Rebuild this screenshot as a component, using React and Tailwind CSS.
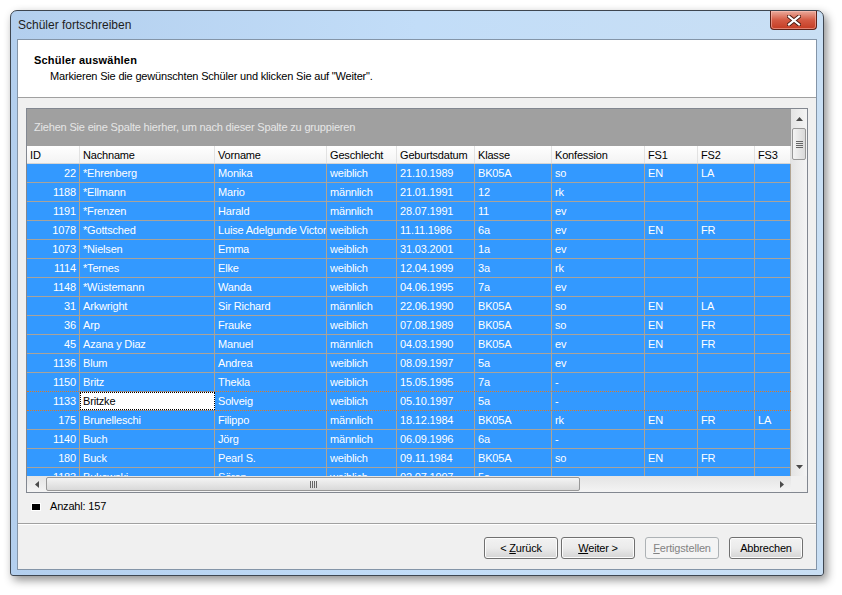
import React from 'react';

const cols = [
  { key: 'id', label: 'ID', w: 'w-[53px]', right: true },
  { key: 'nach', label: 'Nachname', w: 'w-[135px]' },
  { key: 'vor', label: 'Vorname', w: 'w-[112px]' },
  { key: 'ges', label: 'Geschlecht', w: 'w-[70px]' },
  { key: 'geb', label: 'Geburtsdatum', w: 'w-[78px]' },
  { key: 'kl', label: 'Klasse', w: 'w-[77px]' },
  { key: 'konf', label: 'Konfession', w: 'w-[93px]' },
  { key: 'fs1', label: 'FS1', w: 'w-[53px]' },
  { key: 'fs2', label: 'FS2', w: 'w-[57px]' },
  { key: 'fs3', label: 'FS3', w: 'flex-1' },
];

const rows = [
  ['22', '*Ehrenberg', 'Monika', 'weiblich', '21.10.1989', 'BK05A', 'so', 'EN', 'LA', ''],
  ['1188', '*Ellmann', 'Mario', 'männlich', '21.01.1991', '12', 'rk', '', '', ''],
  ['1191', '*Frenzen', 'Harald', 'männlich', '28.07.1991', '11', 'ev', '', '', ''],
  ['1078', '*Gottsched', 'Luise Adelgunde Victoria', 'weiblich', '11.11.1986', '6a', 'ev', 'EN', 'FR', ''],
  ['1073', '*Nielsen', 'Emma', 'weiblich', '31.03.2001', '1a', 'ev', '', '', ''],
  ['1114', '*Ternes', 'Elke', 'weiblich', '12.04.1999', '3a', 'rk', '', '', ''],
  ['1148', '*Wüstemann', 'Wanda', 'weiblich', '04.06.1995', '7a', 'ev', '', '', ''],
  ['31', 'Arkwright', 'Sir Richard', 'männlich', '22.06.1990', 'BK05A', 'so', 'EN', 'LA', ''],
  ['36', 'Arp', 'Frauke', 'weiblich', '07.08.1989', 'BK05A', 'so', 'EN', 'FR', ''],
  ['45', 'Azana y Diaz', 'Manuel', 'männlich', '04.03.1990', 'BK05A', 'ev', 'EN', 'FR', ''],
  ['1136', 'Blum', 'Andrea', 'weiblich', '08.09.1997', '5a', 'ev', '', '', ''],
  ['1150', 'Britz', 'Thekla', 'weiblich', '15.05.1995', '7a', '-', '', '', ''],
  ['1133', 'Britzke', 'Solveig', 'weiblich', '05.10.1997', '5a', '-', '', '', ''],
  ['175', 'Brunelleschi', 'Filippo', 'männlich', '18.12.1984', 'BK05A', 'rk', 'EN', 'FR', 'LA'],
  ['1140', 'Buch', 'Jörg', 'männlich', '06.09.1996', '6a', '-', '', '', ''],
  ['180', 'Buck', 'Pearl S.', 'weiblich', '09.11.1984', 'BK05A', 'so', 'EN', 'FR', ''],
  ['1183', 'Bukowski', 'Sören', 'weiblich', '02.07.1997', '5a', '-', '', '', ''],
];

const Arrow = ({ dir }) => {
  const pts = {
    up: '0,4 7,4 3.5,0',
    down: '0,0 7,0 3.5,4',
    left: '4,0 4,7 0,3.5',
    right: '0,0 0,7 4,3.5',
  }[dir];
  const vertical = dir === 'up' || dir === 'down';
  return (
    <svg width={vertical ? 7 : 4} height={vertical ? 4 : 7} viewBox={vertical ? '0 0 7 4' : '0 0 4 7'}>
      <polygon points={pts} fill="#4a4a4a" />
    </svg>
  );
};

const Button = ({ children, disabled }) => (
  <div
    className={
      disabled
        ? 'w-[74px] h-[22px] rounded-[3px] border border-[#adb2b5] bg-[#f4f4f4] text-[#838383] flex items-center justify-center'
        : 'w-[74px] h-[22px] rounded-[3px] border border-[#707070] bg-gradient-to-b from-[#f2f2f2] via-[#ebebeb] to-[#d4d4d4] text-black flex items-center justify-center shadow-[inset_0_0_0_1px_#fcfcfc]'
    }
  >
    <span className="whitespace-pre">{children}</span>
  </div>
);

export default function App() {
  return (
    <div className="w-[842px] h-[595px] bg-white overflow-hidden font-['Liberation_Sans',_Arial,_sans-serif] text-[11px] tracking-[-0.18px] text-black">
      <div className="pt-[10px] pl-[10px]">
        {/* Window */}
        <div className="w-[814px] h-[566px] rounded-t-[7px] rounded-b-[3px] border border-[#3e4650] bg-gradient-to-r from-[#b3cfee] via-[#c2ddf8] to-[#c9dff4] shadow-[3px_4px_10px_rgba(0,0,0,0.45)] flex flex-col">
          {/* Title bar */}
          <div className="h-[28px] flex justify-between items-start">
            <div className="pl-[7px] pt-[6px] text-[12px] tracking-normal text-[#1e1e1e] leading-[16px]">Schüler fortschreiben</div>
            <div className="mr-[6px] w-[47px] h-[19px] rounded-b-[4px] border border-t-0 border-[#5d2218] bg-gradient-to-b from-[#e9aa9c] via-[#d45a43] to-[#c43b22] flex items-center justify-center shadow-[inset_0_0_0_1px_rgba(255,200,190,0.5)]">
              <svg width="14" height="11" viewBox="0 0 14 11">
                <path d="M2 1.5 L12 9.5 M12 1.5 L2 9.5" stroke="#4a1a10" strokeWidth="4" strokeLinecap="square" />
                <path d="M2 1.5 L12 9.5 M12 1.5 L2 9.5" stroke="#ffffff" strokeWidth="2.2" strokeLinecap="square" />
              </svg>
            </div>
          </div>

          {/* Client area */}
          <div className="mx-[6px] h-[531px] border border-[#8495a8] bg-[#f0f0f0] flex flex-col">
            {/* Header */}
            <div className="h-[58px] bg-white border-b border-[#a0a0a0] pt-[13px] pl-[16px] leading-[14px]">
              <div className="font-bold tracking-[0.2px]">Schüler auswählen</div>
              <div className="pl-[16px] pt-[2px]">Markieren Sie die gewünschten Schüler und klicken Sie auf "Weiter".</div>
            </div>

            {/* Grid */}
            <div className="mt-[10px] mx-[8px] h-[385px] border border-[#828790] bg-white flex flex-col">
              <div className="flex h-[367px]">
                <div className="flex-1 flex flex-col overflow-hidden">
                  <div className="h-[37px] shrink-0 bg-[#a0a0a0] text-[#e6e6e6] pl-[7px] flex items-center">
                    Ziehen Sie eine Spalte hierher, um nach dieser Spalte zu gruppieren
                  </div>
                  <div className="h-[18px] shrink-0 flex bg-gradient-to-b from-white to-[#f3f3f3] border-b border-[#d5d5d5]">
                    {cols.map((c) => (
                      <div key={c.key} className={`${c.w} shrink-0 border-r border-[#e2e2e2] px-[3px] leading-[18px] whitespace-nowrap overflow-hidden`}>
                        {c.label}
                      </div>
                    ))}
                  </div>
                  <div className="flex-1 overflow-hidden">
                    {rows.map((r, i) => {
                      const orange = i === 11 || i === 12;
                      return (
                        <div
                          key={i}
                          className={
                            orange
                              ? 'h-[19px] flex bg-[#3399ff] text-white border-b border-dotted border-[#e07a24]'
                              : 'h-[19px] flex bg-[#3399ff] text-white border-b border-[#aaa39a]'
                          }
                        >
                          {cols.map((c, j) => {
                            const focus = i === 12 && j === 1;
                            return (
                              <div
                                key={c.key}
                                className={
                                  focus
                                    ? `${c.w} shrink-0 bg-white text-black border border-dotted border-black px-[2px] leading-[16px] whitespace-nowrap overflow-hidden`
                                    : `${c.w} shrink-0 border-r border-[#b0a391] px-[3px] leading-[18px] whitespace-nowrap overflow-hidden ${c.right ? 'text-right' : ''}`
                                }
                              >
                                {r[j]}
                              </div>
                            );
                          })}
                        </div>
                      );
                    })}
                  </div>
                </div>
                {/* Vertical scrollbar */}
                <div className="w-[16px] bg-gradient-to-r from-[#e4e4e4] to-[#f4f4f4] flex flex-col items-center">
                  <div className="h-[19px] flex items-center justify-center"><Arrow dir="up" /></div>
                  <div className="w-[14px] h-[32px] rounded-[2px] border border-[#979797] bg-gradient-to-r from-[#f4f4f4] to-[#d9d9d9] flex flex-col items-center justify-center gap-[1px]">
                    <div className="w-[7px] h-[1px] bg-[#666]" />
                    <div className="w-[7px] h-[1px] bg-[#666]" />
                    <div className="w-[7px] h-[1px] bg-[#666]" />
                    <div className="w-[7px] h-[1px] bg-[#666]" />
                  </div>
                  <div className="flex-1" />
                  <div className="h-[19px] flex items-center justify-center"><Arrow dir="down" /></div>
                </div>
              </div>
              {/* Horizontal scrollbar */}
              <div className="flex h-[16px]">
                <div className="flex-1 bg-gradient-to-b from-[#e4e4e4] to-[#f4f4f4] flex items-center">
                  <div className="w-[19px] flex justify-center"><Arrow dir="left" /></div>
                  <div className="w-[534px] h-[14px] rounded-[2px] border border-[#979797] bg-gradient-to-b from-[#f4f4f4] to-[#d9d9d9] flex items-center justify-center gap-[1px]">
                    <div className="w-[1px] h-[7px] bg-[#666]" />
                    <div className="w-[1px] h-[7px] bg-[#666]" />
                    <div className="w-[1px] h-[7px] bg-[#666]" />
                    <div className="w-[1px] h-[7px] bg-[#666]" />
                  </div>
                  <div className="flex-1" />
                  <div className="w-[19px] flex justify-center"><Arrow dir="right" /></div>
                </div>
                <div className="w-[16px] bg-[#f0f0f0]" />
              </div>
            </div>

            {/* Count */}
            <div className="h-[30px] flex items-start pt-[7px] pl-[13px] leading-[13px]">
              <div className="mt-[3px] w-[8px] h-[6px] bg-black border border-white box-content" />
              <div className="pl-[9px]">Anzahl: 157</div>
            </div>

            {/* Separator */}
            <div className="h-[1px] bg-[#a0a0a0]" />
            <div className="h-[1px] bg-white" />

            {/* Buttons */}
            <div className="flex justify-end pt-[12px] pr-[13px]">
              <Button>{'< '}<span className="underline">Z</span>urück</Button>
              <div className="w-[3px]" />
              <Button><span className="underline">W</span>{'eiter >'}</Button>
              <div className="w-[10px]" />
              <Button disabled><span className="underline">F</span>ertigstellen</Button>
              <div className="w-[10px]" />
              <Button>Abbrechen</Button>
            </div>
          </div>
        </div>
      </div>
    </div>
  );
}
